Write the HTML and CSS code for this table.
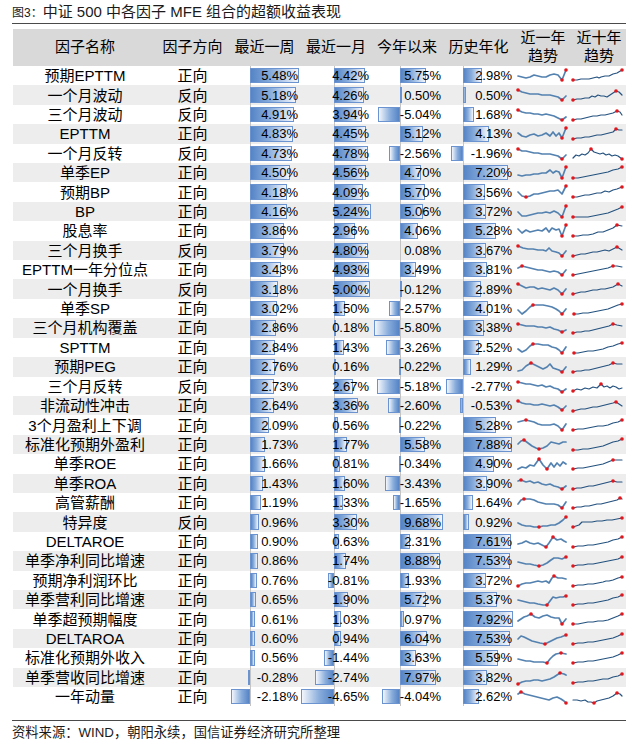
FILE: index.html
```html
<!DOCTYPE html>
<html lang="zh-CN">
<head>
<meta charset="utf-8">
<title>中证500 MFE</title>
<link rel="stylesheet" href="styles.css">
</head>
<body>
<div class="page">
  <div class="title"><span class="fig">图3：</span>中证 500 中各因子 MFE 组合的超额收益表现</div>
  <div class="table">
    <div class="head">
      <div>因子名称</div><div>因子方向</div><div>最近一周</div><div>最近一月</div><div>今年以来</div><div>历史年化</div><div class="two">近一年<br>趋势</div><div class="two">近十年<br>趋势</div>
    </div>
    <div class="rows">
      <div class="row"><div class="nm">预期EPTTM</div><div class="dir">正向</div>
        <div class="val w"><i class="bar" style="left:22px;width:48.8px"></i><span>5.48%</span></div>
        <div class="val m"><i class="bar" style="left:33px;width:31.4px"></i><span>4.42%</span></div>
        <div class="val y"><i class="bar" style="left:29px;width:25.6px"></i><span>5.75%</span></div>
        <div class="val h"><i class="bar" style="left:20px;width:18.6px"></i><span>2.98%</span></div>
        <div class="sp a"><svg viewBox="0 -3 50 19"><polyline points="0,7 4,8 8,9 12,8 16,6 20,7 24,8 28,8 32,6 36,5 40,6 44,11 48,1"/><circle cx="44" cy="11" r="1.8"/><circle cx="48" cy="1" r="1.8"/></svg></div>
        <div class="sp b"><svg viewBox="0 -3 50 19"><polyline points="0,11 4,11 8,10 12,10 16,10 20,9 24,8 26,9 28,8 32,7 36,7 40,5 44,4 49,1"/><circle cx="0" cy="11" r="1.8"/><circle cx="49" cy="1" r="1.8"/></svg></div>
      </div>
      <div class="row"><div class="nm">一个月波动</div><div class="dir">反向</div>
        <div class="val w"><i class="bar" style="left:22px;width:46.1px"></i><span>5.18%</span></div>
        <div class="val m"><i class="bar" style="left:33px;width:30.2px"></i><span>4.26%</span></div>
        <div class="val y"><i class="bar" style="left:29px;width:2.2px"></i><span>0.50%</span></div>
        <div class="val h"><i class="bar" style="left:20px;width:3.1px"></i><span>0.50%</span></div>
        <div class="sp a"><svg viewBox="0 -3 50 19"><polyline points="0,2 4,4 8,5 12,6 16,6 20,6 24,7 28,7 32,7 36,8 40,9 44,12 48,8"/><circle cx="0" cy="2" r="1.8"/><circle cx="44" cy="12" r="1.8"/></svg></div>
        <div class="sp b"><svg viewBox="0 -3 50 19"><polyline points="0,12 4,11 8,11 12,10 16,10 19,8 22,9 25,7 28,8 31,8 34,9 37,7 40,5 43,3 46,4 49,7"/><circle cx="0" cy="12" r="1.8"/><circle cx="43" cy="3" r="1.8"/></svg></div>
      </div>
      <div class="row"><div class="nm">三个月波动</div><div class="dir">反向</div>
        <div class="val w"><i class="bar" style="left:22px;width:43.7px"></i><span>4.91%</span></div>
        <div class="val m"><i class="bar" style="left:33px;width:28px"></i><span>3.94%</span></div>
        <div class="val y"><i class="bar neg" style="left:6.6px;width:22.4px"></i><span>-5.04%</span></div>
        <div class="val h"><i class="bar" style="left:20px;width:10.5px"></i><span>1.68%</span></div>
        <div class="sp a"><svg viewBox="0 -3 50 19"><polyline points="0,2 4,4 8,5 12,5 16,6 20,6 24,7 28,6 32,7 36,8 40,10 44,12 48,9"/><circle cx="0" cy="2" r="1.8"/><circle cx="44" cy="12" r="1.8"/></svg></div>
        <div class="sp b"><svg viewBox="0 -3 50 19"><polyline points="0,12 4,11 8,11 12,10 16,9 20,8 24,8 28,7 32,7 36,6 40,5 44,3 47,4 49,7"/><circle cx="0" cy="12" r="1.8"/><circle cx="44" cy="3" r="1.8"/></svg></div>
      </div>
      <div class="row"><div class="nm">EPTTM</div><div class="dir">正向</div>
        <div class="val w"><i class="bar" style="left:22px;width:43px"></i><span>4.83%</span></div>
        <div class="val m"><i class="bar" style="left:33px;width:31.6px"></i><span>4.45%</span></div>
        <div class="val y"><i class="bar" style="left:29px;width:22.8px"></i><span>5.12%</span></div>
        <div class="val h"><i class="bar" style="left:20px;width:25.8px"></i><span>4.13%</span></div>
        <div class="sp a"><svg viewBox="0 -3 50 19"><polyline points="0,6 4,9 8,10 12,8 16,7 20,9 24,8 28,6 32,9 35,5 38,9 41,6 44,11 48,1"/><circle cx="44" cy="11" r="1.8"/><circle cx="48" cy="1" r="1.8"/></svg></div>
        <div class="sp b"><svg viewBox="0 -3 50 19"><polyline points="0,12 4,11 8,11 12,10 16,10 20,9 24,8 28,8 32,7 36,6 40,5 43,2 46,3 49,3"/><circle cx="0" cy="12" r="1.8"/><circle cx="43" cy="2" r="1.8"/></svg></div>
      </div>
      <div class="row"><div class="nm">一个月反转</div><div class="dir">反向</div>
        <div class="val w"><i class="bar" style="left:22px;width:42.1px"></i><span>4.73%</span></div>
        <div class="val m"><i class="bar" style="left:33px;width:33.9px"></i><span>4.78%</span></div>
        <div class="val y"><i class="bar neg" style="left:17.6px;width:11.4px"></i><span>-2.56%</span></div>
        <div class="val h"><i class="bar neg" style="left:8px;width:12.3px"></i><span>-1.96%</span></div>
        <div class="sp a"><svg viewBox="0 -3 50 19"><polyline points="0,2 4,4 8,4 12,5 16,6 20,6 24,7 28,7 32,7 36,8 40,9 44,12 48,8"/><circle cx="0" cy="2" r="1.8"/><circle cx="44" cy="12" r="1.8"/></svg></div>
        <div class="sp b"><svg viewBox="0 -3 50 19"><polyline points="0,11 3,8 6,9 9,7 12,8 15,6 18,2 21,5 24,6 27,7 30,6 33,8 36,7 39,9 42,8 45,9 49,12"/><circle cx="18" cy="2" r="1.8"/><circle cx="49" cy="12" r="1.8"/></svg></div>
      </div>
      <div class="row"><div class="nm">单季EP</div><div class="dir">正向</div>
        <div class="val w"><i class="bar" style="left:22px;width:40.1px"></i><span>4.50%</span></div>
        <div class="val m"><i class="bar" style="left:33px;width:32.4px"></i><span>4.56%</span></div>
        <div class="val y"><i class="bar" style="left:29px;width:20.9px"></i><span>4.70%</span></div>
        <div class="val h"><i class="bar" style="left:20px;width:45px"></i><span>7.20%</span></div>
        <div class="sp a"><svg viewBox="0 -3 50 19"><polyline points="0,9 4,10 8,9 12,9 16,8 20,8 24,7 28,7 32,4 35,7 38,5 41,6 44,12 48,1"/><circle cx="44" cy="12" r="1.8"/><circle cx="48" cy="1" r="1.8"/></svg></div>
        <div class="sp b"><svg viewBox="0 -3 50 19"><polyline points="0,12 5,12 10,11 15,10 20,9 25,8 30,7 35,6 40,4 45,3 49,1"/><circle cx="0" cy="12" r="1.8"/><circle cx="49" cy="1" r="1.8"/></svg></div>
      </div>
      <div class="row"><div class="nm">预期BP</div><div class="dir">正向</div>
        <div class="val w"><i class="bar" style="left:22px;width:37.2px"></i><span>4.18%</span></div>
        <div class="val m"><i class="bar" style="left:33px;width:29px"></i><span>4.09%</span></div>
        <div class="val y"><i class="bar" style="left:29px;width:25.4px"></i><span>5.70%</span></div>
        <div class="val h"><i class="bar" style="left:20px;width:22.3px"></i><span>3.56%</span></div>
        <div class="sp a"><svg viewBox="0 -3 50 19"><polyline points="0,7 4,11 8,12 12,11 16,9 20,9 24,8 28,7 32,6 36,6 40,5 44,9 48,1"/><circle cx="8" cy="12" r="1.8"/><circle cx="48" cy="1" r="1.8"/></svg></div>
        <div class="sp b"><svg viewBox="0 -3 50 19"><polyline points="0,12 4,12 8,11 12,10 16,10 20,9 24,8 28,8 32,6 36,7 40,5 44,4 49,2"/><circle cx="0" cy="12" r="1.8"/><circle cx="49" cy="2" r="1.8"/></svg></div>
      </div>
      <div class="row"><div class="nm">BP</div><div class="dir">正向</div>
        <div class="val w"><i class="bar" style="left:22px;width:37px"></i><span>4.16%</span></div>
        <div class="val m"><i class="bar" style="left:33px;width:37.2px"></i><span>5.24%</span></div>
        <div class="val y"><i class="bar" style="left:29px;width:22.5px"></i><span>5.06%</span></div>
        <div class="val h"><i class="bar" style="left:20px;width:23.3px"></i><span>3.72%</span></div>
        <div class="sp a"><svg viewBox="0 -3 50 19"><polyline points="0,7 4,11 8,11 12,10 16,9 20,8 24,8 28,7 32,8 36,6 40,8 44,12 48,1"/><circle cx="44" cy="12" r="1.8"/><circle cx="48" cy="1" r="1.8"/></svg></div>
        <div class="sp b"><svg viewBox="0 -3 50 19"><polyline points="0,12 5,12 10,12 15,12 20,11 25,10 30,9 35,8 40,6 45,4 49,2"/><circle cx="0" cy="12" r="1.8"/><circle cx="49" cy="2" r="1.8"/></svg></div>
      </div>
      <div class="row"><div class="nm">股息率</div><div class="dir">正向</div>
        <div class="val w"><i class="bar" style="left:22px;width:34.4px"></i><span>3.86%</span></div>
        <div class="val m"><i class="bar" style="left:33px;width:21px"></i><span>2.96%</span></div>
        <div class="val y"><i class="bar" style="left:29px;width:18.1px"></i><span>4.06%</span></div>
        <div class="val h"><i class="bar" style="left:20px;width:33px"></i><span>5.28%</span></div>
        <div class="sp a"><svg viewBox="0 -3 50 19"><polyline points="0,5 4,9 8,6 12,8 16,7 20,6 24,7 28,4 31,8 34,4 38,6 41,5 44,12 48,1"/><circle cx="44" cy="12" r="1.8"/><circle cx="48" cy="1" r="1.8"/></svg></div>
        <div class="sp b"><svg viewBox="0 -3 50 19"><polyline points="0,12 5,12 10,11 15,11 20,10 25,8 30,8 35,6 40,4 44,1 49,2"/><circle cx="0" cy="12" r="1.8"/><circle cx="44" cy="1" r="1.8"/></svg></div>
      </div>
      <div class="row"><div class="nm">三个月换手</div><div class="dir">反向</div>
        <div class="val w"><i class="bar" style="left:22px;width:33.7px"></i><span>3.79%</span></div>
        <div class="val m"><i class="bar" style="left:33px;width:34.1px"></i><span>4.80%</span></div>
        <div class="val y"><span>0.08%</span></div>
        <div class="val h"><i class="bar" style="left:20px;width:22.9px"></i><span>3.67%</span></div>
        <div class="sp a"><svg viewBox="0 -3 50 19"><polyline points="0,2 5,4 10,5 15,5 20,6 25,6 28,7 31,4 34,7 38,8 41,9 44,12 48,7"/><circle cx="0" cy="2" r="1.8"/><circle cx="44" cy="12" r="1.8"/></svg></div>
        <div class="sp b"><svg viewBox="0 -3 50 19"><polyline points="0,12 4,11 8,10 12,10 16,9 20,8 24,8 28,7 32,6 36,7 40,5 44,3 49,6"/><circle cx="0" cy="12" r="1.8"/><circle cx="44" cy="3" r="1.8"/></svg></div>
      </div>
      <div class="row"><div class="nm">EPTTM一年分位点</div><div class="dir">正向</div>
        <div class="val w"><i class="bar" style="left:22px;width:30.5px"></i><span>3.43%</span></div>
        <div class="val m"><i class="bar" style="left:33px;width:35px"></i><span>4.93%</span></div>
        <div class="val y"><i class="bar" style="left:29px;width:15.5px"></i><span>3.49%</span></div>
        <div class="val h"><i class="bar" style="left:20px;width:23.8px"></i><span>3.81%</span></div>
        <div class="sp a"><svg viewBox="0 -3 50 19"><polyline points="0,5 4,3 8,4 12,5 16,6 20,7 24,7 28,8 32,9 36,8 40,9 44,12 48,7"/><circle cx="4" cy="3" r="1.8"/><circle cx="44" cy="12" r="1.8"/></svg></div>
        <div class="sp b"><svg viewBox="0 -3 50 19"><polyline points="0,12 5,11 10,10 15,9 20,8 25,7 30,6 35,5 40,3 44,3 49,4"/><circle cx="0" cy="12" r="1.8"/><circle cx="40" cy="3" r="1.8"/></svg></div>
      </div>
      <div class="row"><div class="nm">一个月换手</div><div class="dir">反向</div>
        <div class="val w"><i class="bar" style="left:22px;width:28.3px"></i><span>3.18%</span></div>
        <div class="val m"><i class="bar" style="left:33px;width:35.5px"></i><span>5.00%</span></div>
        <div class="val y"><i class="bar neg" style="left:28.5px;width:0.5px"></i><span>-0.12%</span></div>
        <div class="val h"><i class="bar" style="left:20px;width:18.1px"></i><span>2.89%</span></div>
        <div class="sp a"><svg viewBox="0 -3 50 19"><polyline points="0,2 4,4 8,6 12,5 16,5 20,7 24,6 28,7 32,8 36,6 40,8 44,12 48,7"/><circle cx="0" cy="2" r="1.8"/><circle cx="44" cy="12" r="1.8"/></svg></div>
        <div class="sp b"><svg viewBox="0 -3 50 19"><polyline points="0,12 4,11 8,10 12,10 16,9 20,8 24,8 28,7 32,7 36,6 40,5 45,2 49,4"/><circle cx="0" cy="12" r="1.8"/><circle cx="45" cy="2" r="1.8"/></svg></div>
      </div>
      <div class="row"><div class="nm">单季SP</div><div class="dir">正向</div>
        <div class="val w"><i class="bar" style="left:22px;width:26.9px"></i><span>3.02%</span></div>
        <div class="val m"><i class="bar" style="left:33px;width:10.7px"></i><span>1.50%</span></div>
        <div class="val y"><i class="bar neg" style="left:17.6px;width:11.4px"></i><span>-2.57%</span></div>
        <div class="val h"><i class="bar" style="left:20px;width:25.1px"></i><span>4.01%</span></div>
        <div class="sp a"><svg viewBox="0 -3 50 19"><polyline points="0,8 4,12 8,9 12,5 15,3 20,3 25,3 30,4 34,5 38,7 41,9 44,12 48,7"/><circle cx="15" cy="3" r="1.8"/><circle cx="44" cy="12" r="1.8"/></svg></div>
        <div class="sp b"><svg viewBox="0 -3 50 19"><polyline points="1,12 5,12 10,11 15,11 20,10 25,9 30,8 35,7 40,5 45,3 49,2"/><circle cx="1" cy="12" r="1.8"/><circle cx="49" cy="2" r="1.8"/></svg></div>
      </div>
      <div class="row"><div class="nm">三个月机构覆盖</div><div class="dir">正向</div>
        <div class="val w"><i class="bar" style="left:22px;width:25.5px"></i><span>2.86%</span></div>
        <div class="val m"><i class="bar" style="left:33px;width:1.3px"></i><span>0.18%</span></div>
        <div class="val y"><i class="bar neg" style="left:3.2px;width:25.8px"></i><span>-5.80%</span></div>
        <div class="val h"><i class="bar" style="left:20px;width:21.1px"></i><span>3.38%</span></div>
        <div class="sp a"><svg viewBox="0 -3 50 19"><polyline points="0,3 4,4 8,5 12,5 16,5 20,6 24,6 28,7 32,6 36,8 40,9 44,11 48,9"/><circle cx="0" cy="3" r="1.8"/><circle cx="44" cy="11" r="1.8"/></svg></div>
        <div class="sp b"><svg viewBox="0 -3 50 19"><polyline points="0,12 4,11 8,11 12,10 16,10 20,9 24,8 28,7 32,6 36,5 40,3 44,4 49,5"/><circle cx="0" cy="12" r="1.8"/><circle cx="40" cy="3" r="1.8"/></svg></div>
      </div>
      <div class="row"><div class="nm">SPTTM</div><div class="dir">正向</div>
        <div class="val w"><i class="bar" style="left:22px;width:25.3px"></i><span>2.84%</span></div>
        <div class="val m"><i class="bar" style="left:33px;width:10.2px"></i><span>1.43%</span></div>
        <div class="val y"><i class="bar neg" style="left:14.5px;width:14.5px"></i><span>-3.26%</span></div>
        <div class="val h"><i class="bar" style="left:20px;width:15.8px"></i><span>2.52%</span></div>
        <div class="sp a"><svg viewBox="0 -3 50 19"><polyline points="0,8 4,11 8,9 12,5 15,3 20,3 25,4 30,4 34,6 38,7 41,9 44,12 48,6"/><circle cx="15" cy="3" r="1.8"/><circle cx="44" cy="12" r="1.8"/></svg></div>
        <div class="sp b"><svg viewBox="0 -3 50 19"><polyline points="1,12 5,12 10,11 15,10 20,10 25,9 30,8 35,6 40,5 45,3 49,2"/><circle cx="1" cy="12" r="1.8"/><circle cx="49" cy="2" r="1.8"/></svg></div>
      </div>
      <div class="row"><div class="nm">预期PEG</div><div class="dir">正向</div>
        <div class="val w"><i class="bar" style="left:22px;width:24.6px"></i><span>2.76%</span></div>
        <div class="val m"><i class="bar" style="left:33px;width:1.1px"></i><span>0.16%</span></div>
        <div class="val y"><i class="bar neg" style="left:28px;width:1px"></i><span>-0.22%</span></div>
        <div class="val h"><i class="bar" style="left:20px;width:8.1px"></i><span>1.29%</span></div>
        <div class="sp a"><svg viewBox="0 -3 50 19"><polyline points="0,11 4,10 8,6 13,3 17,5 21,7 25,9 29,7 32,4 35,8 38,9 41,10 44,12 48,7"/><circle cx="13" cy="3" r="1.8"/><circle cx="44" cy="12" r="1.8"/></svg></div>
        <div class="sp b"><svg viewBox="0 -3 50 19"><polyline points="0,12 4,11 8,11 12,10 16,10 20,9 24,8 28,7 32,6 36,5 40,3 44,4 49,4"/><circle cx="0" cy="12" r="1.8"/><circle cx="40" cy="3" r="1.8"/></svg></div>
      </div>
      <div class="row"><div class="nm">三个月反转</div><div class="dir">反向</div>
        <div class="val w"><i class="bar" style="left:22px;width:24.3px"></i><span>2.73%</span></div>
        <div class="val m"><i class="bar" style="left:33px;width:19px"></i><span>2.67%</span></div>
        <div class="val y"><i class="bar neg" style="left:5.9px;width:23.1px"></i><span>-5.18%</span></div>
        <div class="val h"><i class="bar neg" style="left:3px;width:17.3px"></i><span>-2.77%</span></div>
        <div class="sp a"><svg viewBox="0 -3 50 19"><polyline points="0,2 4,3 8,4 12,4 16,5 20,6 24,5 28,7 32,6 36,8 40,9 44,12 48,9"/><circle cx="0" cy="2" r="1.8"/><circle cx="44" cy="12" r="1.8"/></svg></div>
        <div class="sp b"><svg viewBox="0 -3 50 19"><polyline points="0,11 4,9 8,10 12,8 16,9 20,7 24,8 28,4 31,7 34,6 37,8 40,6 43,7 46,9 49,8"/><circle cx="0" cy="11" r="1.8"/><circle cx="28" cy="4" r="1.8"/></svg></div>
      </div>
      <div class="row"><div class="nm">非流动性冲击</div><div class="dir">正向</div>
        <div class="val w"><i class="bar" style="left:22px;width:23.5px"></i><span>2.64%</span></div>
        <div class="val m"><i class="bar" style="left:33px;width:23.9px"></i><span>3.36%</span></div>
        <div class="val y"><i class="bar neg" style="left:17.4px;width:11.6px"></i><span>-2.60%</span></div>
        <div class="val h"><i class="bar neg" style="left:17px;width:3.3px"></i><span>-0.53%</span></div>
        <div class="sp a"><svg viewBox="0 -3 50 19"><polyline points="0,2 4,4 8,5 12,5 16,6 20,6 24,5 28,6 32,7 36,6 40,8 44,11 48,7"/><circle cx="0" cy="2" r="1.8"/><circle cx="44" cy="11" r="1.8"/></svg></div>
        <div class="sp b"><svg viewBox="0 -3 50 19"><polyline points="0,12 4,11 8,10 12,10 16,9 20,8 24,8 28,7 32,6 36,5 40,4 43,3 46,5 49,7"/><circle cx="0" cy="12" r="1.8"/><circle cx="43" cy="3" r="1.8"/></svg></div>
      </div>
      <div class="row"><div class="nm">3个月盈利上下调</div><div class="dir">正向</div>
        <div class="val w"><i class="bar" style="left:22px;width:18.6px"></i><span>2.09%</span></div>
        <div class="val m"><i class="bar" style="left:33px;width:4px"></i><span>0.56%</span></div>
        <div class="val y"><i class="bar neg" style="left:28px;width:1px"></i><span>-0.22%</span></div>
        <div class="val h"><i class="bar" style="left:20px;width:33px"></i><span>5.28%</span></div>
        <div class="sp a"><svg viewBox="0 -3 50 19"><polyline points="0,4 4,3 8,2 12,3 16,4 20,6 24,7 28,7 32,7 36,6 40,8 44,12 48,6"/><circle cx="8" cy="2" r="1.8"/><circle cx="44" cy="12" r="1.8"/></svg></div>
        <div class="sp b"><svg viewBox="0 -3 50 19"><polyline points="0,12 5,11 10,11 15,10 20,9 25,8 30,8 35,7 40,5 45,4 49,2"/><circle cx="0" cy="12" r="1.8"/><circle cx="49" cy="2" r="1.8"/></svg></div>
      </div>
      <div class="row"><div class="nm">标准化预期外盈利</div><div class="dir">正向</div>
        <div class="val w"><i class="bar" style="left:22px;width:15.4px"></i><span>1.73%</span></div>
        <div class="val m"><i class="bar" style="left:33px;width:12.6px"></i><span>1.77%</span></div>
        <div class="val y"><i class="bar" style="left:29px;width:24.8px"></i><span>5.58%</span></div>
        <div class="val h"><i class="bar" style="left:20px;width:49.3px"></i><span>7.88%</span></div>
        <div class="sp a"><svg viewBox="0 -3 50 19"><polyline points="0,6 3,3 6,2 10,5 14,8 18,10 21,11 25,10 29,8 33,4 37,5 41,6 45,4 48,4"/><circle cx="6" cy="2" r="1.8"/><circle cx="21" cy="11" r="1.8"/></svg></div>
        <div class="sp b"><svg viewBox="0 -3 50 19"><polyline points="0,12 5,12 10,11 15,11 20,10 25,9 30,8 35,6 40,4 45,3 49,1"/><circle cx="0" cy="12" r="1.8"/><circle cx="49" cy="1" r="1.8"/></svg></div>
      </div>
      <div class="row"><div class="nm">单季ROE</div><div class="dir">正向</div>
        <div class="val w"><i class="bar" style="left:22px;width:14.8px"></i><span>1.66%</span></div>
        <div class="val m"><i class="bar" style="left:33px;width:5.8px"></i><span>0.81%</span></div>
        <div class="val y"><i class="bar neg" style="left:27.5px;width:1.5px"></i><span>-0.34%</span></div>
        <div class="val h"><i class="bar" style="left:20px;width:30.6px"></i><span>4.90%</span></div>
        <div class="sp a"><svg viewBox="0 -3 50 19"><polyline points="0,12 4,10 8,11 12,8 16,9 21,2 25,8 29,12 33,6 36,10 39,6 42,9 45,5 48,7"/><circle cx="21" cy="2" r="1.8"/><circle cx="29" cy="12" r="1.8"/></svg></div>
        <div class="sp b"><svg viewBox="0 -3 50 19"><polyline points="0,12 5,11 10,11 15,10 20,9 25,8 30,7 35,5 40,3 45,3 49,3"/><circle cx="0" cy="12" r="1.8"/><circle cx="40" cy="3" r="1.8"/></svg></div>
      </div>
      <div class="row"><div class="nm">单季ROA</div><div class="dir">正向</div>
        <div class="val w"><i class="bar" style="left:22px;width:12.7px"></i><span>1.43%</span></div>
        <div class="val m"><i class="bar" style="left:33px;width:11.4px"></i><span>1.60%</span></div>
        <div class="val y"><i class="bar neg" style="left:13.7px;width:15.3px"></i><span>-3.43%</span></div>
        <div class="val h"><i class="bar" style="left:20px;width:24.4px"></i><span>3.90%</span></div>
        <div class="sp a"><svg viewBox="0 -3 50 19"><polyline points="0,4 3,3 8,5 12,4 16,6 20,5 24,7 28,8 32,7 36,9 40,10 44,12 48,9"/><circle cx="3" cy="3" r="1.8"/><circle cx="44" cy="12" r="1.8"/></svg></div>
        <div class="sp b"><svg viewBox="0 -3 50 19"><polyline points="0,12 4,11 8,11 12,10 16,9 20,9 24,8 28,7 32,6 36,5 40,4 44,5 49,5"/><circle cx="0" cy="12" r="1.8"/><circle cx="40" cy="4" r="1.8"/></svg></div>
      </div>
      <div class="row"><div class="nm">高管薪酬</div><div class="dir">正向</div>
        <div class="val w"><i class="bar" style="left:22px;width:10.6px"></i><span>1.19%</span></div>
        <div class="val m"><i class="bar" style="left:33px;width:9.4px"></i><span>1.33%</span></div>
        <div class="val y"><i class="bar neg" style="left:21.7px;width:7.3px"></i><span>-1.65%</span></div>
        <div class="val h"><i class="bar" style="left:20px;width:10.3px"></i><span>1.64%</span></div>
        <div class="sp a"><svg viewBox="0 -3 50 19"><polyline points="0,8 3,4 6,3 12,3 16,4 20,6 24,7 28,8 32,8 36,8 40,9 44,12 48,6"/><circle cx="6" cy="3" r="1.8"/><circle cx="44" cy="12" r="1.8"/></svg></div>
        <div class="sp b"><svg viewBox="0 -3 50 19"><polyline points="0,12 4,11 8,11 12,10 16,10 20,9 24,8 28,8 32,7 36,6 40,5 44,4 47,2 49,3"/><circle cx="0" cy="12" r="1.8"/><circle cx="47" cy="2" r="1.8"/></svg></div>
      </div>
      <div class="row"><div class="nm">特异度</div><div class="dir">反向</div>
        <div class="val w"><i class="bar" style="left:22px;width:8.5px"></i><span>0.96%</span></div>
        <div class="val m"><i class="bar" style="left:33px;width:23.4px"></i><span>3.30%</span></div>
        <div class="val y"><i class="bar" style="left:29px;width:43.1px"></i><span>9.68%</span></div>
        <div class="val h"><i class="bar" style="left:20px;width:5.8px"></i><span>0.92%</span></div>
        <div class="sp a"><svg viewBox="0 -3 50 19"><polyline points="0,8 4,10 8,11 12,11 16,12 21,12 25,11 29,11 33,10 37,10 41,8 45,5 48,2"/><circle cx="21" cy="12" r="1.8"/><circle cx="48" cy="2" r="1.8"/></svg></div>
        <div class="sp b"><svg viewBox="0 -3 50 19"><polyline points="0,12 3,11 6,10 9,7 14,7 19,7 24,6 29,6 34,5 39,5 44,4 49,3"/><circle cx="0" cy="12" r="1.8"/><circle cx="49" cy="3" r="1.8"/></svg></div>
      </div>
      <div class="row"><div class="nm">DELTAROE</div><div class="dir">正向</div>
        <div class="val w"><i class="bar" style="left:22px;width:8px"></i><span>0.90%</span></div>
        <div class="val m"><i class="bar" style="left:33px;width:4.5px"></i><span>0.63%</span></div>
        <div class="val y"><i class="bar" style="left:29px;width:10.3px"></i><span>2.31%</span></div>
        <div class="val h"><i class="bar" style="left:20px;width:47.6px"></i><span>7.61%</span></div>
        <div class="sp a"><svg viewBox="0 -3 50 19"><polyline points="0,9 4,8 8,6 12,8 16,9 20,8 24,10 28,12 31,8 35,2 39,5 43,4 46,6 48,7"/><circle cx="28" cy="12" r="1.8"/><circle cx="35" cy="2" r="1.8"/></svg></div>
        <div class="sp b"><svg viewBox="0 -3 50 19"><polyline points="0,12 5,11 10,11 15,10 20,10 25,9 30,8 35,7 40,5 45,4 49,2"/><circle cx="0" cy="12" r="1.8"/><circle cx="49" cy="2" r="1.8"/></svg></div>
      </div>
      <div class="row"><div class="nm">单季净利同比增速</div><div class="dir">正向</div>
        <div class="val w"><i class="bar" style="left:22px;width:7.7px"></i><span>0.86%</span></div>
        <div class="val m"><i class="bar" style="left:33px;width:12.4px"></i><span>1.74%</span></div>
        <div class="val y"><i class="bar" style="left:29px;width:39.5px"></i><span>8.88%</span></div>
        <div class="val h"><i class="bar" style="left:20px;width:47.1px"></i><span>7.53%</span></div>
        <div class="sp a"><svg viewBox="0 -3 50 19"><polyline points="0,8 4,9 8,10 12,10 16,11 21,12 25,11 29,9 33,6 36,4 40,4 44,5 48,3"/><circle cx="21" cy="12" r="1.8"/><circle cx="48" cy="3" r="1.8"/></svg></div>
        <div class="sp b"><svg viewBox="0 -3 50 19"><polyline points="0,12 5,11 10,11 15,10 20,10 25,9 30,8 35,7 40,6 45,5 49,3"/><circle cx="0" cy="12" r="1.8"/><circle cx="49" cy="3" r="1.8"/></svg></div>
      </div>
      <div class="row"><div class="nm">预期净利润环比</div><div class="dir">正向</div>
        <div class="val w"><i class="bar" style="left:22px;width:6.8px"></i><span>0.76%</span></div>
        <div class="val m"><i class="bar neg" style="left:27.2px;width:5.8px"></i><span>-0.81%</span></div>
        <div class="val y"><i class="bar" style="left:29px;width:8.6px"></i><span>1.93%</span></div>
        <div class="val h"><i class="bar" style="left:20px;width:23.3px"></i><span>3.72%</span></div>
        <div class="sp a"><svg viewBox="0 -3 50 19"><polyline points="0,12 4,10 8,9 12,9 16,8 20,7 24,8 28,7 31,9 34,4 36,2 40,4 44,4 48,5"/><circle cx="0" cy="12" r="1.8"/><circle cx="36" cy="2" r="1.8"/></svg></div>
        <div class="sp b"><svg viewBox="0 -3 50 19"><polyline points="0,12 5,11 10,11 15,10 20,10 25,9 30,8 33,7 36,7 40,6 45,4 49,3"/><circle cx="0" cy="12" r="1.8"/><circle cx="49" cy="3" r="1.8"/></svg></div>
      </div>
      <div class="row"><div class="nm">单季营利同比增速</div><div class="dir">正向</div>
        <div class="val w"><i class="bar" style="left:22px;width:5.8px"></i><span>0.65%</span></div>
        <div class="val m"><i class="bar" style="left:33px;width:13.5px"></i><span>1.90%</span></div>
        <div class="val y"><i class="bar" style="left:29px;width:25.5px"></i><span>5.72%</span></div>
        <div class="val h"><i class="bar" style="left:20px;width:33.6px"></i><span>5.37%</span></div>
        <div class="sp a"><svg viewBox="0 -3 50 19"><polyline points="0,7 4,8 8,9 12,10 16,10 20,11 25,12 29,12 32,8 35,4 38,5 42,4 45,4 48,3"/><circle cx="29" cy="12" r="1.8"/><circle cx="48" cy="3" r="1.8"/></svg></div>
        <div class="sp b"><svg viewBox="0 -3 50 19"><polyline points="0,12 5,11 10,11 15,10 20,10 25,9 30,8 35,7 40,5 45,4 49,2"/><circle cx="0" cy="12" r="1.8"/><circle cx="49" cy="2" r="1.8"/></svg></div>
      </div>
      <div class="row"><div class="nm">单季超预期幅度</div><div class="dir">正向</div>
        <div class="val w"><i class="bar" style="left:22px;width:5.4px"></i><span>0.61%</span></div>
        <div class="val m"><i class="bar" style="left:33px;width:7.3px"></i><span>1.03%</span></div>
        <div class="val y"><i class="bar" style="left:29px;width:4.3px"></i><span>0.97%</span></div>
        <div class="val h"><i class="bar" style="left:20px;width:49.5px"></i><span>7.92%</span></div>
        <div class="sp a"><svg viewBox="0 -3 50 19"><polyline points="0,9 3,7 6,5 9,4 13,2 17,5 21,6 25,4 29,3 33,5 37,6 41,6 44,12 48,7"/><circle cx="13" cy="2" r="1.8"/><circle cx="44" cy="12" r="1.8"/></svg></div>
        <div class="sp b"><svg viewBox="0 -3 50 19"><polyline points="0,12 5,12 10,11 15,10 20,10 25,9 30,9 35,8 40,6 45,4 49,2"/><circle cx="0" cy="12" r="1.8"/><circle cx="49" cy="2" r="1.8"/></svg></div>
      </div>
      <div class="row"><div class="nm">DELTAROA</div><div class="dir">正向</div>
        <div class="val w"><i class="bar" style="left:22px;width:5.3px"></i><span>0.60%</span></div>
        <div class="val m"><i class="bar" style="left:33px;width:6.7px"></i><span>0.94%</span></div>
        <div class="val y"><i class="bar" style="left:29px;width:26.9px"></i><span>6.04%</span></div>
        <div class="val h"><i class="bar" style="left:20px;width:47.1px"></i><span>7.53%</span></div>
        <div class="sp a"><svg viewBox="0 -3 50 19"><polyline points="0,7 3,4 6,5 10,7 14,9 18,10 22,11 27,12 31,10 35,8 39,6 43,5 48,3"/><circle cx="27" cy="12" r="1.8"/><circle cx="48" cy="3" r="1.8"/></svg></div>
        <div class="sp b"><svg viewBox="0 -3 50 19"><polyline points="0,12 5,11 10,11 15,10 20,10 25,9 30,8 35,7 40,6 45,4 49,2"/><circle cx="0" cy="12" r="1.8"/><circle cx="49" cy="2" r="1.8"/></svg></div>
      </div>
      <div class="row"><div class="nm">标准化预期外收入</div><div class="dir">正向</div>
        <div class="val w"><i class="bar" style="left:22px;width:5px"></i><span>0.56%</span></div>
        <div class="val m"><i class="bar neg" style="left:22.8px;width:10.2px"></i><span>-1.44%</span></div>
        <div class="val y"><i class="bar" style="left:29px;width:16.2px"></i><span>3.63%</span></div>
        <div class="val h"><i class="bar" style="left:20px;width:34.9px"></i><span>5.59%</span></div>
        <div class="sp a"><svg viewBox="0 -3 50 19"><polyline points="0,8 4,9 8,10 12,10 16,11 20,11 25,11 29,12 32,8 35,5 38,3 43,2 48,3"/><circle cx="29" cy="12" r="1.8"/><circle cx="43" cy="2" r="1.8"/></svg></div>
        <div class="sp b"><svg viewBox="0 -3 50 19"><polyline points="0,12 5,11 10,11 15,10 20,10 25,9 30,8 35,7 40,6 45,4 49,2"/><circle cx="0" cy="12" r="1.8"/><circle cx="49" cy="2" r="1.8"/></svg></div>
      </div>
      <div class="row"><div class="nm">单季营收同比增速</div><div class="dir">正向</div>
        <div class="val w"><i class="bar neg" style="left:19.5px;width:2.5px"></i><span>-0.28%</span></div>
        <div class="val m"><i class="bar neg" style="left:13.5px;width:19.5px"></i><span>-2.74%</span></div>
        <div class="val y"><i class="bar" style="left:29px;width:35.5px"></i><span>7.97%</span></div>
        <div class="val h"><i class="bar" style="left:20px;width:23.9px"></i><span>3.82%</span></div>
        <div class="sp a"><svg viewBox="0 -3 50 19"><polyline points="0,13 4,11 8,10 12,10 16,9 20,9 24,10 28,9 32,8 36,6 39,4 42,2 46,3 48,4"/><circle cx="0" cy="13" r="1.8"/><circle cx="42" cy="2" r="1.8"/></svg></div>
        <div class="sp b"><svg viewBox="0 -3 50 19"><polyline points="0,12 5,11 10,11 15,10 20,10 25,9 30,8 35,8 40,6 45,5 49,3"/><circle cx="0" cy="12" r="1.8"/><circle cx="49" cy="3" r="1.8"/></svg></div>
      </div>
      <div class="row"><div class="nm">一年动量</div><div class="dir">正向</div>
        <div class="val w"><i class="bar neg" style="left:2.6px;width:19.4px"></i><span>-2.18%</span></div>
        <div class="val m"><i class="bar neg" style="left:0;width:33px"></i><span>-4.65%</span></div>
        <div class="val y"><i class="bar neg" style="left:11px;width:18px"></i><span>-4.04%</span></div>
        <div class="val h"><i class="bar" style="left:20px;width:16.4px"></i><span>2.62%</span></div>
        <div class="sp a"><svg viewBox="0 -3 50 19"><polyline points="0,4 3,2 7,4 11,5 15,6 19,7 23,8 27,9 31,10 35,8 39,7 43,9 46,11 48,13"/><circle cx="3" cy="2" r="1.8"/><circle cx="48" cy="13" r="1.8"/></svg></div>
        <div class="sp b"><svg viewBox="0 -3 50 19"><polyline points="0,10 4,10 8,11 12,10 15,12 18,12 21,13 24,11 28,10 32,9 36,8 40,6 44,3 47,4 49,6"/><circle cx="21" cy="13" r="1.8"/><circle cx="44" cy="3" r="1.8"/></svg></div>
      </div>
    </div>
  </div>
  <div class="source">资料来源：WIND，朝阳永续，国信证券经济研究所整理</div>
</div>
</body>
</html>
```

FILE: styles.css
```css
html, body {
  margin: 0;
  padding: 0;
  background: #ffffff;
}

body {
  font-family: "Liberation Sans", "Noto Sans CJK SC", sans-serif;
  color: #000000;
}

.page {
  width: 614px;
  padding-left: 12px;
}

.title {
  height: 22.5px;
  line-height: 23px;
  font-size: 15px;
  color: #1a1a1a;
  border-bottom: 1.5px solid #4a4a4a;
  white-space: nowrap;
}

.title .fig {
  font-size: 12px;
}

.table {
  margin-top: 5px;
  margin-left: 1px;
  width: 613px;
}

.head,
.row {
  display: grid;
  grid-template-columns: 144px 71px 73px 70px 72px 71px 58px 54px;
}

.head {
  height: 37.5px;
  background: #d9d9d9;
  font-size: 15px;
}

.head > div {
  display: flex;
  align-items: center;
  justify-content: center;
  text-align: center;
  line-height: 18px;
  white-space: nowrap;
}

.row {
  height: 19.41px;
  font-size: 15px;
}

.row:nth-child(even) {
  background: #ededed;
}

.nm,
.dir {
  display: flex;
  align-items: center;
  justify-content: center;
  line-height: 19px;
  white-space: nowrap;
}

.val {
  position: relative;
  display: flex;
  align-items: center;
  justify-content: flex-end;
  padding-right: 2px;
  font-size: 13px;
  line-height: 19px;
}

.val.w {
  padding-right: 3px;
}

.val::before {
  content: "";
  position: absolute;
  top: 0;
  bottom: 0;
  width: 1px;
  background: #c4c4c4;
}

.val.w::before { left: 22px; }
.val.m::before { left: 33px; }
.val.y::before { left: 29px; }
.val.h::before { left: 20px; }

.val span {
  position: relative;
  z-index: 1;
}

.bar {
  position: absolute;
  top: 2px;
  bottom: 2px;
  box-sizing: border-box;
  border: 1px solid #6a93cf;
  background: linear-gradient(to right, #5584c6 0%, #8aaedc 45%, #f3f6fc 100%);
}

.bar.neg {
  background: linear-gradient(to left, #5584c6 0%, #8aaedc 45%, #f3f6fc 100%);
}

.sp {
  display: flex;
  align-items: flex-start;
}

.sp.a {
  padding-left: 4px;
}

.sp.b {
  padding-left: 1px;
}

.sp svg {
  display: block;
  width: 50px;
  height: 19px;
  overflow: visible;
}

.sp polyline {
  fill: none;
  stroke-linejoin: round;
  stroke-linecap: round;
}

.sp.a polyline {
  stroke: #5482b0;
  stroke-width: 1.7;
}

.sp.b polyline {
  stroke: #24527f;
  stroke-width: 1.2;
}

.sp circle {
  fill: #e3161c;
}

.source {
  margin-top: 14px;
  border-top: 1.5px solid #4a4a4a;
  padding-top: 2px;
  line-height: 20px;
  font-size: 13.3px;
  color: #1a1a1a;
  white-space: nowrap;
}
```
